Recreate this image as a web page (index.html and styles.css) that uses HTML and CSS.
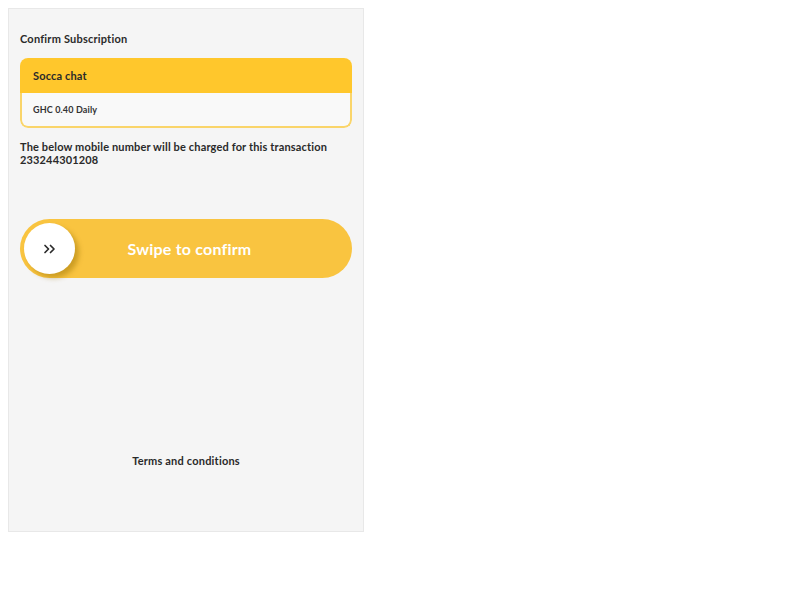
FILE: index.html
```html
<!DOCTYPE html>
<html lang="en">
<head>
    <meta charset="UTF-8">
    <meta name="viewport" content="width=device-width, initial-scale=1.0">
    <title>Confirm Subscription</title>
    <link rel="stylesheet" href="styles.css">
</head>
<body>
    <div class="screen">
        <div class="title">Confirm Subscription</div>
        <div class="plan-card">
            <div class="plan-name">Socca chat</div>
            <div class="plan-price">GHC 0.40 Daily</div>
        </div>
        <p class="charge-note">The below mobile number will be charged for this transaction<br>233244301208</p>
        <div class="swipe">
            <div class="swipe-knob">
                <svg width="14" height="10" viewBox="0 0 14 10" xmlns="http://www.w3.org/2000/svg">
                    <polyline points="2,1.5 5.5,5 2,8.5" fill="none" stroke="#2b2b2b" stroke-width="1.7" stroke-linecap="round" stroke-linejoin="round"/>
                    <polyline points="7.5,1.5 11,5 7.5,8.5" fill="none" stroke="#2b2b2b" stroke-width="1.7" stroke-linecap="round" stroke-linejoin="round"/>
                </svg>
            </div>
            <span class="swipe-label">Swipe to confirm</span>
        </div>
        <a class="terms" href="#">Terms and conditions</a>
    </div>
</body>
</html>
```

FILE: styles.css
```css
body {
    margin: 8px;
    background-color: white;
    font-family: Lato, "Noto Sans", sans-serif;
    color: #222;
}
.screen {
    width: 356px;
    height: 524px;
    box-sizing: border-box;
    border: 1px solid #e8e8e8;
    background-color: #f5f5f5;
    padding: 23px 11px 0;
    display: flex;
    flex-direction: column;
    letter-spacing: 0.15px;
}
.title {
    font-size: 11px;
    font-weight: 700;
    line-height: 14px;
    color: #2a2a2a;
    letter-spacing: 0.2px;
}
.plan-card {
    margin-top: 12px;
    border-radius: 8px;
    overflow: hidden;
    background-color: #f9f9f9;
}
.plan-name {
    height: 35px;
    display: flex;
    align-items: center;
    padding-left: 13px;
    background-color: #ffc72c;
    font-size: 11px;
    font-weight: 700;
    color: #2a2a2a;
}
.plan-price {
    height: 35px;
    box-sizing: border-box;
    display: flex;
    align-items: center;
    padding-left: 11px;
    border: 2px solid #fad56a;
    border-top: none;
    border-radius: 0 0 8px 8px;
    font-size: 9px;
    font-weight: 700;
    color: #333;
}
.charge-note {
    margin: 12px 0 0;
    font-size: 11px;
    font-weight: 700;
    line-height: 13px;
    color: #2a2a2a;
}
.swipe {
    position: relative;
    margin-top: 53px;
    height: 59px;
    border-radius: 30px;
    background-color: #f9c440;
    display: flex;
    align-items: center;
    justify-content: center;
}
.swipe-knob {
    position: absolute;
    left: 4px;
    top: 4px;
    width: 51px;
    height: 51px;
    border-radius: 50%;
    background-color: white;
    box-shadow: 4px 4px 5px rgba(150, 110, 0, 0.45);
    display: flex;
    align-items: center;
    justify-content: center;
}
.swipe-label {
    margin-left: 7px;
    font-size: 16px;
    font-weight: 700;
    color: white;
    letter-spacing: 0.2px;
}
.terms {
    margin-top: 176px;
    text-align: center;
    font-size: 11px;
    font-weight: 700;
    line-height: 14px;
    color: #2a2a2a;
    text-decoration: none;
    letter-spacing: 0.2px;
}
```
